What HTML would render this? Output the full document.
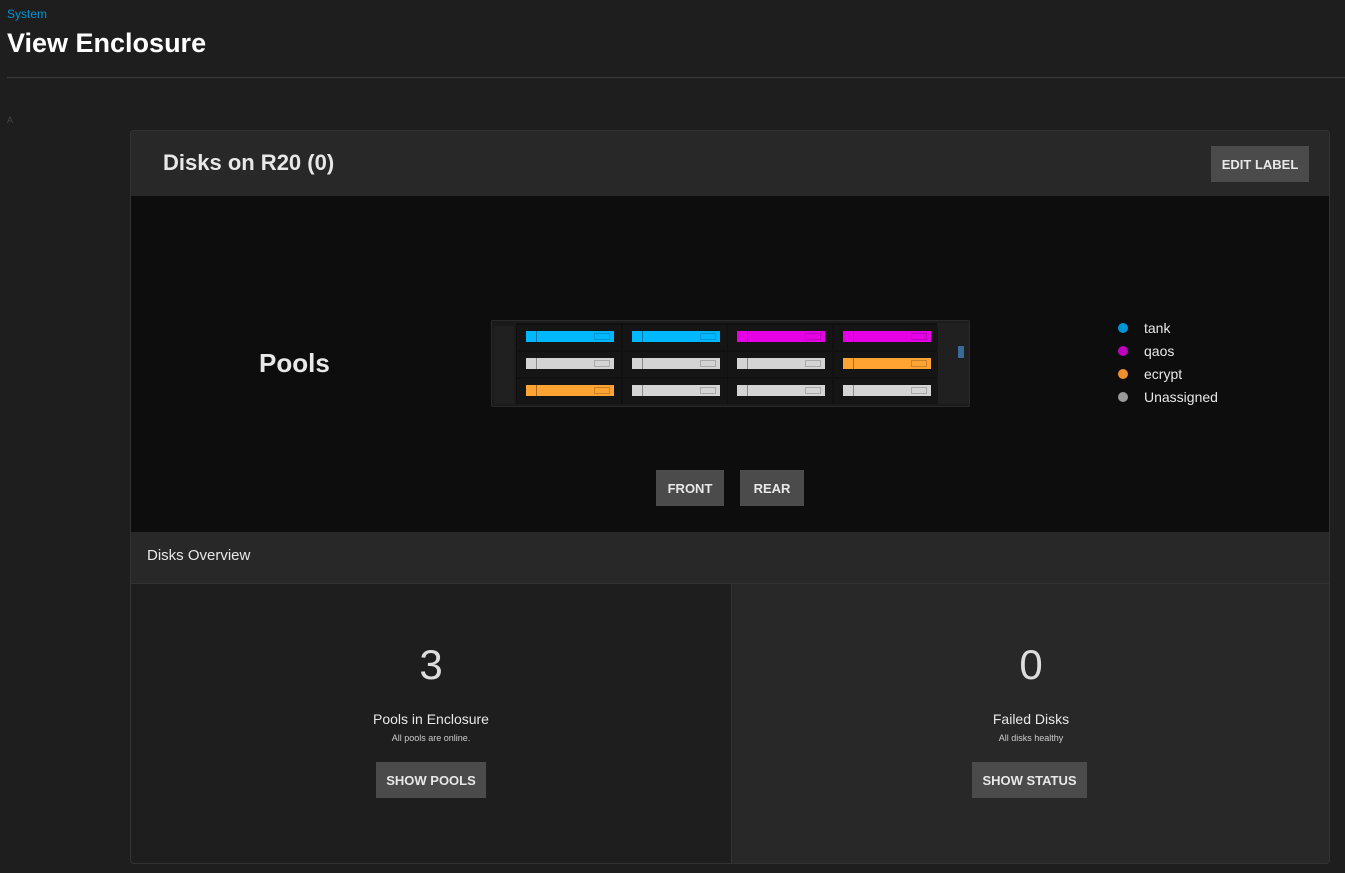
<!DOCTYPE html>
<html><head><style>
*{margin:0;padding:0;box-sizing:border-box}
body{width:1345px;height:873px;background:#1e1e1e;font-family:"Liberation Sans",sans-serif;color:#fff;position:relative;overflow:hidden}
.a{position:absolute}
.btn{position:absolute;background:#4b4b4b;color:#e8e8e8;font-weight:bold;font-size:13px;display:flex;align-items:center;justify-content:center}
.bay{position:absolute;width:104px;height:25px;background:#151515}
.bar{position:absolute;left:9px;top:6px;width:88px;height:11px}
.bar i{position:absolute;left:10px;top:0;width:1px;height:11px;background:rgba(0,0,0,.35)}
.bar b{position:absolute;right:4px;top:2px;width:16px;height:7px;border:1px solid rgba(0,0,0,.2)}
.dot{position:absolute;width:10px;height:10px;border-radius:50%}
.lg{position:absolute;font-size:14px;color:#e8e8e8}
</style></head><body>
<div class="a" style="left:7px;top:7px;font-size:12px;color:#0095d5">System</div>
<div class="a" style="left:7px;top:28px;font-size:27px;font-weight:bold">View Enclosure</div>
<div class="a" style="left:7px;top:77px;width:1338px;height:1px;background:#3a3a3a"></div>
<div class="a" style="left:7px;top:115px;font-size:9px;color:#444">A</div>

<div class="a" style="left:130px;top:130px;width:1200px;height:734px;border:1px solid #333;border-radius:4px;overflow:hidden;background:#1e1e1e">
  <div class="a" style="left:0;top:0;width:1200px;height:65px;background:#282828"></div>
  <div class="a" style="left:32px;top:19px;font-size:22px;font-weight:bold;color:#e8e8e8">Disks on R20 (0)</div>
  <div class="btn" style="left:1080px;top:15px;width:98px;height:36px">EDIT LABEL</div>
  <div class="a" style="left:0;top:65px;width:1200px;height:336px;background:#0d0d0d"></div>
  <div class="a" style="left:128px;top:217px;font-size:26px;font-weight:bold;color:#e8e8e8">Pools</div>
  <div class="btn" style="left:525px;top:339px;width:68px;height:36px">FRONT</div>
  <div class="btn" style="left:609px;top:339px;width:64px;height:36px">REAR</div>
  <div class="a" style="left:0;top:401px;width:1200px;height:52px;background:#282828;border-bottom:1px solid #333"></div>
  <div class="a" style="left:16px;top:416px;font-size:15px;color:#e8e8e8">Disks Overview</div>
  <div class="a" style="left:600px;top:453px;width:600px;height:281px;background:#282828;border-left:1px solid #333"></div>
  <div class="a" style="left:0;top:510px;width:600px;text-align:center;font-size:42px;color:#ddd">3</div>
  <div class="a" style="left:0;top:580px;width:600px;text-align:center;font-size:14px;color:#e8e8e8">Pools in Enclosure</div>
  <div class="a" style="left:0;top:602px;width:600px;text-align:center;font-size:9px;color:#ccc">All pools are online.</div>
  <div class="btn" style="left:245px;top:631px;width:110px;height:36px">SHOW POOLS</div>
  <div class="a" style="left:600px;top:510px;width:600px;text-align:center;font-size:42px;color:#ddd">0</div>
  <div class="a" style="left:600px;top:580px;width:600px;text-align:center;font-size:14px;color:#e8e8e8">Failed Disks</div>
  <div class="a" style="left:600px;top:602px;width:600px;text-align:center;font-size:9px;color:#ccc">All disks healthy</div>
  <div class="btn" style="left:841px;top:631px;width:115px;height:36px">SHOW STATUS</div>
</div>

<div class="a" style="left:491px;top:320px;width:479px;height:87px;background:#1a1a1a;border:1px solid #2a2a2a;border-radius:2px"></div>
<div class="a" style="left:516px;top:323px;width:421px;height:81px;background:#101010"></div>
<div class="a" style="left:937px;top:323px;width:32px;height:81px;background:#202020"></div>
<div class="a" style="left:958px;top:346px;width:6px;height:12px;background:#3a6a9a"></div>
<div class="a" style="left:494px;top:326px;width:20px;height:78px;background:#202020"></div>
<div class="bay" style="left:517px;top:325px"><div class="bar" style="background:#00b8ff"><i></i><b></b></div></div>
<div class="bay" style="left:623px;top:325px"><div class="bar" style="background:#00b8ff"><i></i><b></b></div></div>
<div class="bay" style="left:728px;top:325px"><div class="bar" style="background:#e600e6"><i></i><b></b></div></div>
<div class="bay" style="left:834px;top:325px"><div class="bar" style="background:#e600e6"><i></i><b></b></div></div>
<div class="bay" style="left:517px;top:352px"><div class="bar" style="background:#d4d4d4"><i></i><b></b></div></div>
<div class="bay" style="left:623px;top:352px"><div class="bar" style="background:#d4d4d4"><i></i><b></b></div></div>
<div class="bay" style="left:728px;top:352px"><div class="bar" style="background:#d4d4d4"><i></i><b></b></div></div>
<div class="bay" style="left:834px;top:352px"><div class="bar" style="background:#ffa333"><i></i><b></b></div></div>
<div class="bay" style="left:517px;top:379px"><div class="bar" style="background:#ffa333"><i></i><b></b></div></div>
<div class="bay" style="left:623px;top:379px"><div class="bar" style="background:#d4d4d4"><i></i><b></b></div></div>
<div class="bay" style="left:728px;top:379px"><div class="bar" style="background:#d4d4d4"><i></i><b></b></div></div>
<div class="bay" style="left:834px;top:379px"><div class="bar" style="background:#d4d4d4"><i></i><b></b></div></div>

<div class="dot" style="left:1118px;top:323px;background:#0095d5"></div><div class="lg" style="left:1144px;top:320px">tank</div>
<div class="dot" style="left:1118px;top:346px;background:#c000c0"></div><div class="lg" style="left:1144px;top:343px">qaos</div>
<div class="dot" style="left:1118px;top:369px;background:#f0902a"></div><div class="lg" style="left:1144px;top:366px">ecrypt</div>
<div class="dot" style="left:1118px;top:392px;background:#999"></div><div class="lg" style="left:1144px;top:389px">Unassigned</div>
</body></html>
